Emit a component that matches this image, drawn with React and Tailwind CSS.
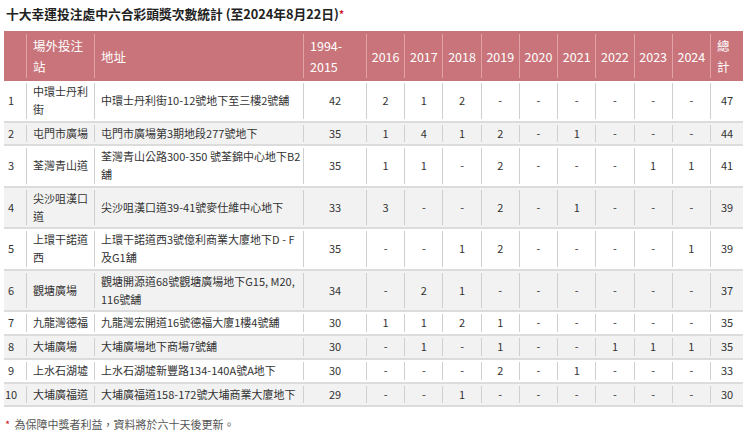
import React from "react";

const years = ["2016", "2017", "2018", "2019", "2020", "2021", "2022", "2023", "2024"];

const rows = [
  [1, "中環士丹利街", "中環士丹利街10-12號地下至三樓2號舖", 42, ["2", "1", "2", "-", "-", "-", "-", "-", "-"], 47],
  [2, "屯門市廣場", "屯門市廣場第3期地段277號地下", 35, ["1", "4", "1", "2", "-", "1", "-", "-", "-"], 44],
  [3, "荃灣青山道", "荃灣青山公路300-350 號荃錦中心地下B2舖", 35, ["1", "1", "-", "2", "-", "-", "-", "1", "1"], 41],
  [4, "尖沙咀漢口道", "尖沙咀漢口道39-41號麥仕維中心地下", 33, ["3", "-", "-", "2", "-", "1", "-", "-", "-"], 39],
  [5, "上環干諾道西", "上環干諾道西3號億利商業大廈地下D - F及G1舖", 35, ["-", "-", "1", "2", "-", "-", "-", "-", "1"], 39],
  [6, "觀塘廣場", "觀塘開源道68號觀塘廣場地下G15, M20, 116號舖", 34, ["-", "2", "1", "-", "-", "-", "-", "-", "-"], 37],
  [7, "九龍灣德福", "九龍灣宏開道16號德福大廈1樓4號舖", 30, ["1", "1", "2", "1", "-", "-", "-", "-", "-"], 35],
  [8, "大埔廣場", "大埔廣場地下商場7號舖", 30, ["-", "1", "-", "1", "-", "-", "1", "1", "1"], 35],
  [9, "上水石湖墟", "上水石湖墟新豐路134-140A號A地下", 30, ["-", "-", "-", "2", "-", "1", "-", "-", "-"], 33],
  [10, "大埔廣福道", "大埔廣福道158-172號大埔商業大廈地下", 29, ["-", "-", "1", "-", "-", "-", "-", "-", "-"], 30],
];

const cols = "grid grid-cols-[22px_68px_209px_63px_repeat(9,minmax(0,1fr))_33px]";

const App = () => {
  return (
    <div
      className="w-[750px] h-[448px] bg-white pl-[4px] pt-[4px] text-[#333]"
      style={{ fontFamily: '"Noto Sans CJK TC", "Noto Sans", sans-serif' }}
    >
      {/* Title */}
      <h1 className="pl-[2px] text-[12.75px] font-bold leading-[20px] text-[#222] mb-[7px]">
        十大幸運投注處中六合彩頭獎次數統計 (至2024年8月22日)
        <span className="text-[#d0182c] text-[10px] align-top">*</span>
      </h1>

      <div className="w-[739px]">
        {/* Header */}
        <div className={`${cols} h-[50px] bg-[#c9747a] text-white text-[12.5px] leading-[21px] py-[3px]`}>
          <div />
          <div className="flex items-center px-[6px] border-l border-[#dfa3a7]">場外投注站</div>
          <div className="flex items-center px-[6px] border-l border-[#dfa3a7]">地址</div>
          <div className="flex items-center px-[6px] border-l border-[#dfa3a7]">1994-2015</div>
          {years.map((y) => (
            <div key={y} className="flex items-center justify-center border-l border-[#dfa3a7]">
              {y}
            </div>
          ))}
          <div className="flex items-center px-[6px] border-l border-[#dfa3a7]">總計</div>
        </div>

        {/* Rows */}
        {rows.map(([no, name, addr, early, counts, total]) => (
          <div
            key={no}
            className={`${cols} text-[11px] leading-[17.75px] py-[2px] border-b-2 border-[#dcdcdc] ${
              no % 2 === 0 ? "bg-[#f2f2f2]" : "bg-white"
            }`}
          >
            <div className="flex items-center justify-center pr-[8px]">{no}</div>
            <div className="flex items-center px-[6px] border-l border-[#cfcfcf]">{name}</div>
            <div className="flex items-center pl-[6px] pr-[1px] border-l border-[#cfcfcf]">{addr}</div>
            <div className="flex items-center justify-center border-l border-[#cfcfcf]">{early}</div>
            {counts.map((c, i) => (
              <div key={i} className="flex items-center justify-center border-l border-[#cfcfcf]">
                {c}
              </div>
            ))}
            <div className="flex items-center justify-center border-l border-[#cfcfcf]">{total}</div>
          </div>
        ))}
      </div>

      {/* Footnote */}
      <p className="mt-[8px] pl-[1px] text-[11px] leading-[18px] text-[#555]">
        <span className="text-[#d0182c] mr-[2px]">*</span> 為保障中獎者利益，資料將於六十天後更新。
      </p>
    </div>
  );
};

export default App;
